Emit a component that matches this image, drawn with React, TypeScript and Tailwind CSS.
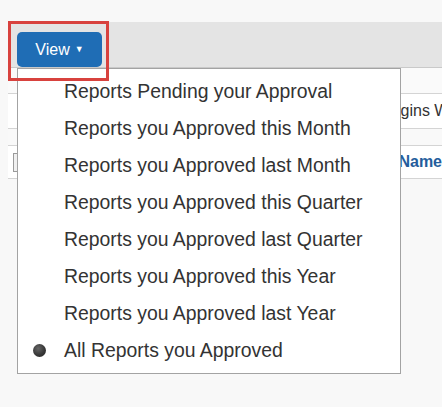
import React from "react";

const items = [
  "Reports Pending your Approval",
  "Reports you Approved this Month",
  "Reports you Approved last Month",
  "Reports you Approved this Quarter",
  "Reports you Approved last Quarter",
  "Reports you Approved this Year",
  "Reports you Approved last Year",
  "All Reports you Approved",
];

export default function App() {
  return (
    <div
      className="relative w-[442px] h-[407px] overflow-hidden bg-[#f8f8f8] pt-[22px] text-[#333]"
      style={{ fontFamily: '"Liberation Sans", Arial, sans-serif' }}
    >
      {/* toolbar band */}
      <div className="ml-[9px] h-[46px] bg-[#e4e4e4] border-b border-[#c9c9c9]" />

      {/* table behind */}
      <div className="ml-[8px]">
        <div className="h-[26px] bg-[#fafafa] border-b border-[#d4d4d4]" />
        <div className="h-[35px] bg-white border-b border-[#d4d4d4] flex items-center pl-[373px] whitespace-nowrap text-[16px]">
          Begins With
        </div>
        <div className="h-[17px] bg-[#f9f9f9] border-b border-[#d4d4d4]" />
        <div className="h-[33px] bg-white border-b border-[#d4d4d4] flex items-center whitespace-nowrap">
          <div className="ml-[5px] w-[14px] h-[19px] border border-[#9a9a9a] bg-[#f0f0f0]" />
          <div className="ml-[376px] text-[16px] font-bold text-[#245d9c]">Name</div>
        </div>
      </div>

      {/* dropdown menu */}
      <div className="absolute left-[17px] top-[68px] w-[384px] bg-white border border-[#a3a3a3] py-[4px] z-10">
        {items.map((t, i) => (
          <div key={t} className="h-[37px] flex items-center text-[19.4px] whitespace-nowrap">
            <div className="w-[46px] flex items-center pl-[15px]">
              {i === items.length - 1 && (
                <span
                  className="block w-[13px] h-[13px] rounded-full"
                  style={{ background: "radial-gradient(circle at 40% 35%, #666 0%, #383838 55%, #222 100%)" }}
                />
              )}
            </div>
            <span>{t}</span>
          </div>
        ))}
      </div>

      {/* View button */}
      <div className="absolute left-[17px] top-[32px] w-[85px] h-[35px] z-20 rounded-[5px] bg-[#1f6db5] flex items-center justify-center gap-[5px] text-white text-[16px]">
        <span>View</span>
        <span className="text-[9px] mt-[1px]">▼</span>
      </div>

      {/* red highlight box */}
      <div className="absolute left-[8px] top-[21px] w-[101px] h-[60px] border-[3px] border-[#d8423e] z-30" />
    </div>
  );
}
